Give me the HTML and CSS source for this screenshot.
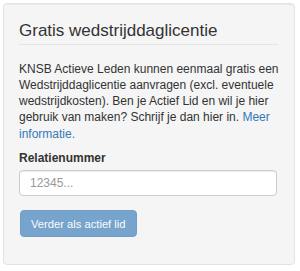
FILE: index.html
```html
<!DOCTYPE html>
<html lang="nl">
<head>
<meta charset="utf-8">
<title>Gratis wedstrijddaglicentie</title>
<link rel="stylesheet" href="styles.css">
</head>
<body>
<div class="page">
  <div class="well">
    <h3 class="title">Gratis wedstrijddaglicentie</h3>
    <p class="intro">KNSB Actieve Leden kunnen eenmaal gratis een Wedstrijddaglicentie aanvragen (excl. eventuele wedstrijdkosten). Ben je Actief Lid en wil je hier gebruik van maken? Schrijf je dan hier in. <a href="#" class="link">Meer informatie.</a></p>
    <form class="form">
      <div class="form-group">
        <label class="label" for="rel">Relatienummer</label>
        <input class="input" id="rel" type="text" placeholder="12345...">
      </div>
      <button class="btn" type="button" disabled>Verder als actief lid</button>
    </form>
  </div>
</div>
</body>
</html>
```

FILE: styles.css
```css
html, body {
  margin: 0;
  padding: 0;
  background: #ffffff;
}
body {
  font-family: "Liberation Sans", Arial, sans-serif;
  font-size: 12px;
  line-height: 16.25px;
  color: #333333;
}
.page {
  padding: 3px 0 0 3px;
}
.well {
  width: 262px;
  padding: 18px 13px 27px 15px;
  background: #f5f5f5;
  border: 1px solid #e3e3e3;
  border-radius: 4px;
  box-shadow: inset 0 1px 1px rgba(0,0,0,0.05);
}
.title {
  margin: 0 3px 16px 0;
  padding-bottom: 3px;
  font-size: 17px;
  line-height: 18.7px;
  font-weight: 400;
  color: #333333;
  border-bottom: 1px solid #e5e5e5;
}
.intro {
  margin: 0 0 8px 0;
}
.link {
  color: #337ab7;
  text-decoration: none;
}
.form {
  margin: 0;
}
.form-group {
  margin-bottom: 14px;
}
.label {
  display: block;
  font-weight: 700;
  margin-bottom: 4px;
}
.input {
  display: block;
  box-sizing: border-box;
  width: 258px;
  height: 26px;
  margin: 0;
  padding: 4px 10px;
  font-family: "Liberation Sans", Arial, sans-serif;
  font-size: 12px;
  color: #555555;
  background: #ffffff;
  border: 1px solid #cccccc;
  border-radius: 4px;
  box-shadow: inset 0 1px 1px rgba(0,0,0,0.075);
}
.input::placeholder {
  color: #999999;
}
.btn {
  display: block;
  box-sizing: border-box;
  height: 27px;
  margin: 0 0 0 1px;
  padding: 0 10px;
  font-family: "Liberation Sans", Arial, sans-serif;
  font-size: 11.2px;
  color: #ffffff;
  background: #337ab7;
  border: 1px solid #2e6da4;
  border-radius: 4px;
  opacity: 0.65;
  cursor: not-allowed;
}
```
